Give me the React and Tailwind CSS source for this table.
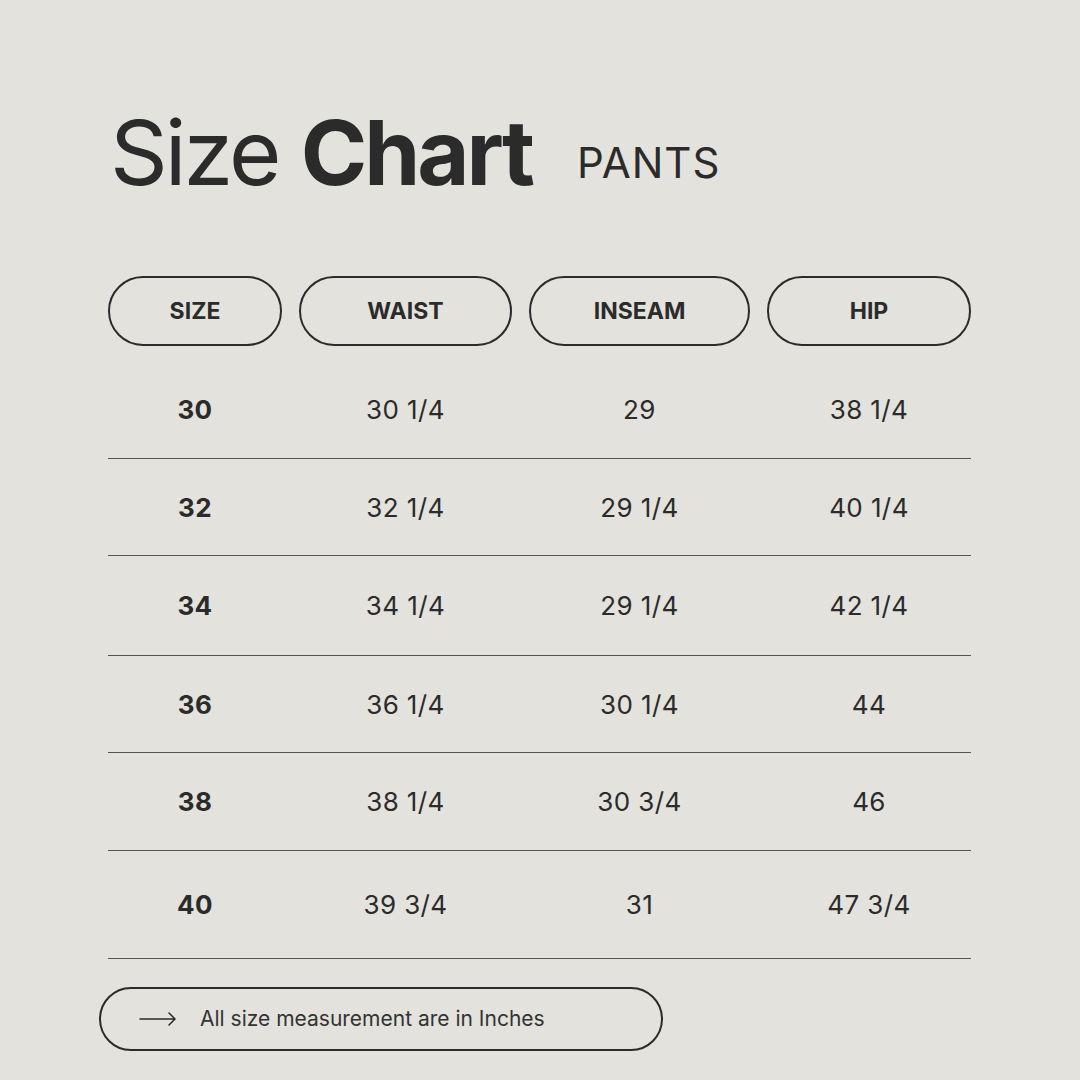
import React from "react";

const headers = [
  { label: "SIZE", w: "w-[174px]" },
  { label: "WAIST", w: "w-[213px]" },
  { label: "INSEAM", w: "w-[221px]" },
  { label: "HIP", w: "w-[204px]" },
];

const rows = [
  { h: "h-[98px]", cells: ["30", "30 1/4", "29", "38 1/4"] },
  { h: "h-[97px]", cells: ["32", "32 1/4", "29 1/4", "40 1/4"] },
  { h: "h-[100px]", cells: ["34", "34 1/4", "29 1/4", "42 1/4"] },
  { h: "h-[97px]", cells: ["36", "36 1/4", "30 1/4", "44"] },
  { h: "h-[98px]", cells: ["38", "38 1/4", "30 3/4", "46"] },
  { h: "h-[108px]", cells: ["40", "39 3/4", "31", "47 3/4"] },
];

const cellClass = [
  "w-[174px] text-center font-bold",
  "w-[213px] ml-[17px] text-center",
  "w-[221px] ml-[17px] text-center",
  "w-[204px] ml-[17px] text-center",
];

const SizeChart = () => {
  return (
    <div className="w-[1080px] h-[1080px] bg-[#e3e2dd] text-[#2b2b2b] font-['Inter',sans-serif] overflow-hidden">
      {/* title */}
      <div className="pl-[110px] pt-[108px] h-[276px]">
        <div className="flex items-end">
          <h1 className="text-[90px] leading-none tracking-[-3px]">
            <span className="font-normal">Size </span>
            <span className="font-bold">Chart</span>
          </h1>
          <span className="ml-[45px] mb-[14px] text-[42px] leading-none tracking-[1px]">PANTS</span>
        </div>
      </div>

      <div className="ml-[108px] w-[863px]">
        {/* header pills */}
        <div className="flex gap-[17px] mb-[15px]">
          {headers.map((item) => (
            <div
              key={item.label}
              className={`${item.w} h-[70px] rounded-full border-2 border-[#2b2b2b] flex items-center justify-center text-[23px] font-bold`}
            >
              {item.label}
            </div>
          ))}
        </div>

        {/* rows */}
        {rows.map((row, i) => (
          <div key={i} className={`${row.h} flex items-center border-b border-[#555] text-[26px] tracking-[0.4px]`}>
            {row.cells.map((cell, j) => (
              <div key={j} className={cellClass[j]}>
                {cell}
              </div>
            ))}
          </div>
        ))}
      </div>

      {/* footer note */}
      <div className="ml-[99px] mt-[28px] w-[564px] h-[64px] rounded-full border-2 border-[#2b2b2b] flex items-center pl-[38px]">
        <svg width="38" height="14" viewBox="0 0 38 14" fill="none" stroke="#2b2b2b" strokeWidth="1.5" strokeLinecap="round">
          <path d="M1 7h35M30 1l6 6-6 6" />
        </svg>
        <span className="ml-[23px] text-[21px] text-[#333]">All size measurement are in Inches</span>
      </div>
    </div>
  );
};

export default function App() {
  return <SizeChart />;
}
